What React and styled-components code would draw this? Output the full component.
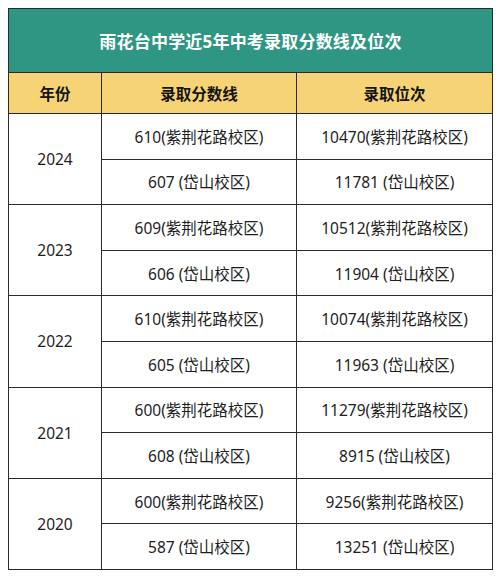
import React from 'react';
import styled, { createGlobalStyle } from 'styled-components';

const GlobalStyle = createGlobalStyle`
  html, body {
    margin: 0;
    padding: 0;
    background: #fff;
  }
  body {
    font-family: "Noto Sans", "Noto Sans CJK SC", sans-serif;
  }
`;

const Page = styled.div`
  padding: 8px 8px 0 8px;
  width: 500px;
  box-sizing: border-box;
`;

const Table = styled.table`
  width: 484px;
  border-collapse: collapse;
  table-layout: fixed;
  color: #1e1e1e;
`;

const Title = styled.th`
  background: #2f9683;
  color: #fff;
  height: 63px;
  font-size: 17px;
  font-weight: 700;
  border: 1.5px solid #2a2a2a;
  padding: 0;
  letter-spacing: 0.2px;
`;

const HeadCell = styled.th`
  background: #f6d475;
  height: 40px;
  font-size: 15.5px;
  font-weight: 700;
  border: 1.5px solid #2a2a2a;
  padding: 0;
  color: #151515;
`;

const Cell = styled.td`
  height: 44.6px;
  font-size: 15.5px;
  text-align: center;
  border: 1.5px solid #2a2a2a;
  padding: 0;
`;

const data = [
  { year: '2024', rows: [['610(紫荆花路校区)', '10470(紫荆花路校区)'], ['607 (岱山校区)', '11781 (岱山校区)']] },
  { year: '2023', rows: [['609(紫荆花路校区)', '10512(紫荆花路校区)'], ['606 (岱山校区)', '11904 (岱山校区)']] },
  { year: '2022', rows: [['610(紫荆花路校区)', '10074(紫荆花路校区)'], ['605 (岱山校区)', '11963 (岱山校区)']] },
  { year: '2021', rows: [['600(紫荆花路校区)', '11279(紫荆花路校区)'], ['608 (岱山校区)', '8915 (岱山校区)']] },
  { year: '2020', rows: [['600(紫荆花路校区)', '9256(紫荆花路校区)'], ['587 (岱山校区)', '13251 (岱山校区)']] },
];

export default function App() {
  return (
    <Page>
      <GlobalStyle />
      <Table>
        <colgroup>
          <col style={{ width: 93 }} />
          <col style={{ width: 195 }} />
          <col style={{ width: 196 }} />
        </colgroup>
        <thead>
          <tr>
            <Title colSpan={3}>雨花台中学近5年中考录取分数线及位次</Title>
          </tr>
          <tr>
            <HeadCell>年份</HeadCell>
            <HeadCell>录取分数线</HeadCell>
            <HeadCell>录取位次</HeadCell>
          </tr>
        </thead>
        <tbody>
          {data.map((g) => (
            <React.Fragment key={g.year}>
              <tr>
                <Cell rowSpan={2}>{g.year}</Cell>
                <Cell>{g.rows[0][0]}</Cell>
                <Cell>{g.rows[0][1]}</Cell>
              </tr>
              <tr>
                <Cell>{g.rows[1][0]}</Cell>
                <Cell>{g.rows[1][1]}</Cell>
              </tr>
            </React.Fragment>
          ))}
        </tbody>
      </Table>
    </Page>
  );
}
